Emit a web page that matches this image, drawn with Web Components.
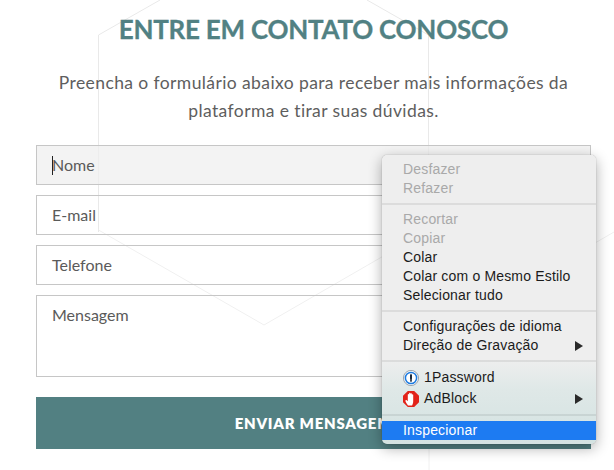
<!DOCTYPE html>
<html lang="pt"><head><meta charset="utf-8"><title>Contato</title>
<style>html,body{margin:0;padding:0;background:#fff}body{width:614px;height:470px;overflow:hidden;position:relative}</style>
</head><body>
<contact-page>
  <contact-field slot="fields" focused>Nome</contact-field>
  <contact-field slot="fields">E-mail</contact-field>
  <contact-field slot="fields">Telefone</contact-field>
  <contact-field slot="fields" multi>Mensagem</contact-field>
</contact-page>
<context-menu></context-menu>
<script>
class ContactField extends HTMLElement{constructor(){super();const s=this.attachShadow({mode:'open'});s.innerHTML=`<style>
:host{display:flex;box-sizing:border-box;height:40px;border:1px solid #c6c6c6;padding:0 15px;align-items:center;font:16px/20px Lato,sans-serif;color:#5a5a5a;background:transparent}
:host([focused]){background:rgba(238,238,238,.7)}
:host([multi]){height:82px;align-items:flex-start;padding-top:9px}
.caret{width:1px;height:19px;background:#222;margin-right:-1px;display:none}
:host([focused]) .caret{display:block}
</style><span class="caret"></span><slot></slot>`}}
customElements.define('contact-field',ContactField);
class ContactPage extends HTMLElement{constructor(){super();const s=this.attachShadow({mode:'open'});s.innerHTML=`<style>
:host{display:block;box-sizing:border-box;width:614px;height:470px;padding:0 23px 0 36px;position:relative;font-family:Lato,sans-serif}
svg{position:absolute;left:0;top:0;pointer-events:none}
.c{position:relative}
h1{margin:0;padding-top:11px;height:58px;box-sizing:border-box;font:700 26px/36px Lato,sans-serif;letter-spacing:-.25px;color:#518183;text-align:center;-webkit-text-stroke:.3px #518183}
p{margin:11px 0 0;font:400 17.5px/28px Lato,sans-serif;letter-spacing:.4px;color:#5e5e5e;text-align:center}
.f{display:flex;flex-direction:column;gap:10px;margin-top:20px}
button{display:block;width:100%;height:52px;margin-top:20px;border:0;background:#528082;color:#fff;font:800 15px/52px Lato,sans-serif;letter-spacing:.75px;padding:0}
</style>
<svg width="614" height="470" fill="none" stroke-width="1"><path stroke="#e9e9e9" d="M160 0 98.500 35V232M367 0 428.500 35V160"/><path stroke="#f0f0f0" d="M98.500 230 264 325 428.500 230M429 339V470M429 339 614 232"/></svg>
<div class="c"><h1>ENTRE EM CONTATO CONOSCO</h1>
<p>Preencha o formulário abaixo para receber mais informações da<br>plataforma e tirar suas dúvidas.</p>
<div class="f"><slot name="fields"></slot></div>
<button>ENVIAR MENSAGEM</button></div>`}}
customElements.define('contact-page',ContactPage);
class MenuItem extends HTMLElement{constructor(){super();const s=this.attachShadow({mode:'open'});s.innerHTML=`<style>
:host{display:flex;align-items:center;height:19px;padding:0 13px 0 21px;color:#1b1b1b;white-space:nowrap}
:host([disabled]){color:#a9a9a9}
:host([tall]){height:21px}
:host([active]){background:#1d7bf2;color:#fff}
.t{flex:1;display:flex;align-items:center;gap:5px}
.a{display:none;width:0;height:0;border-left:8px solid #2a2a2a;border-top:5px solid transparent;border-bottom:5px solid transparent}
:host([sub]) .a{display:block}
</style><span class="t"><slot name="icon"></slot><slot></slot></span><span class="a"></span>`}}
customElements.define('menu-item',MenuItem);
class MenuSep extends HTMLElement{constructor(){super();const s=this.attachShadow({mode:'open'});s.innerHTML=`<style>
:host{display:flex;height:12px;align-items:center}
i{display:block;width:100%;height:2px;background:rgba(0,0,0,.075)}
</style><i></i>`}}
customElements.define('menu-sep',MenuSep);
class ContextMenu extends HTMLElement{constructor(){super();const s=this.attachShadow({mode:'open'});s.innerHTML=`<style>
:host{display:block;position:absolute;left:382px;top:155px;width:214px;height:289px;box-sizing:border-box;padding:5px 0 4px;border-radius:5px;overflow:visible;
background:linear-gradient(#eeeeee 0,#eeeeee 205px,#dfe8e7 235px,#d3e2e1 289px);box-shadow:0 0 1px rgba(0,0,0,.45),0 4px 14px rgba(0,0,0,.33);
font:14px/19px "Liberation Sans",sans-serif;letter-spacing:.17px}
svg{display:block;flex:none}
</style>
<menu-item disabled>Desfazer</menu-item><menu-item disabled>Refazer</menu-item><menu-sep></menu-sep>
<menu-item disabled>Recortar</menu-item><menu-item disabled>Copiar</menu-item><menu-item>Colar</menu-item><menu-item>Colar com o Mesmo Estilo</menu-item><menu-item>Selecionar tudo</menu-item><menu-sep></menu-sep>
<menu-item>Configurações de idioma</menu-item><menu-item sub>Direção de Gravação</menu-item><menu-sep></menu-sep>
<menu-item tall><svg slot="icon" width="16" height="16" viewBox="0 0 16 16"><circle cx="8" cy="8" r="7.600" fill="#f4f6f8" stroke="#7b8794" stroke-width=".7"/><circle cx="8" cy="8" r="5.600" fill="#fff" stroke="#1b7ae0" stroke-width="1.500"/><rect x="7" y="4.300" width="2" height="4.700" rx=".6" fill="#1c2a3a"/><rect x="7.200" y="9" width="1.600" height="2.700" fill="#1c2a3a"/></svg>1Password</menu-item>
<menu-item tall sub><svg slot="icon" width="16" height="16" viewBox="0 0 16 16"><path d="M4.800 0h6.400L16 4.800v6.400L11.200 16H4.800L0 11.200V4.800z" fill="#e2231a"/><path d="M5 14.500C4 13 2.400 11 2.400 9.700c0-.7.800-1 1.300-.5l1.100 1.100V3.800c0-1 1.200-1 1.300 0V2.600c0-1 1.300-1 1.400 0v.2c0-.9 1.400-.9 1.400 0v1c0-.9 1.300-.9 1.300 0V10c0 2-.5 3.300-1.100 4.500z" fill="#fff"/></svg>AdBlock</menu-item><menu-sep></menu-sep>
<menu-item active>Inspecionar</menu-item>`}}
customElements.define('context-menu',ContextMenu);
</script>
</body></html>
